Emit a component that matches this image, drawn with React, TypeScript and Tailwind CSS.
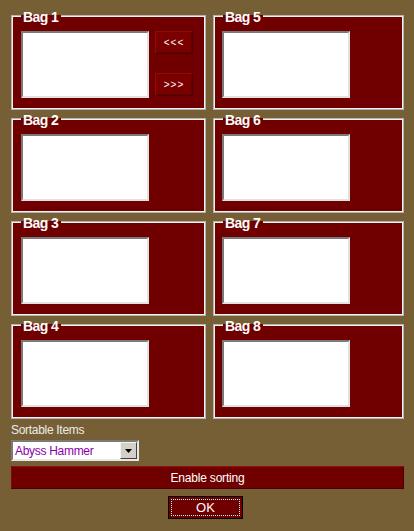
import { Fragment } from 'react';

const bagsLeft = [
  { name: 'Bag 1', arrows: true },
  { name: 'Bag 2', arrows: false },
  { name: 'Bag 3', arrows: false },
  { name: 'Bag 4', arrows: false },
];
const bagsRight = ['Bag 5', 'Bag 6', 'Bag 7', 'Bag 8'];

const font = "font-['Liberation_Sans',Arial,sans-serif]";

function ListBox() {
  return (
    <div className="w-[128px] h-[67px] bg-white border-2 border-t-[#7a7a7a] border-l-[#7a7a7a] border-b-[#e2e2e2] border-r-[#e2e2e2]" />
  );
}

function ArrowButton({ label }: { label: string }) {
  return (
    <button className="w-[38px] h-[23px] bg-[#7a0000] border border-t-[#8c0c0c] border-l-[#8c0c0c] border-b-[#4e0000] border-r-[#4e0000] shadow-[inset_-1px_-1px_0_#620000] text-white text-[10px] leading-none tracking-[1px] flex items-center justify-center">
      {label}
    </button>
  );
}

function Bag({ name, arrows, left }: { name: string; arrows?: boolean; left: boolean }) {
  return (
    <div
      className={`relative h-[95px] bg-[#700000] border border-[#b4b4b4] shadow-[inset_0_0_0_1px_#f2f2f2] pt-[15px] flex gap-[6px] ${
        left ? 'pl-[9px]' : 'pl-[8px]'
      }`}
    >
      <span className="absolute top-[-7px] left-[9px] w-[40px] h-[16px] pl-[2px] bg-[linear-gradient(#765f34_6px,#700000_6px)] text-white font-bold text-[14px] leading-[16px] tracking-[-0.6px]">
        {name}
      </span>
      <ListBox />
      {arrows && (
        <div className="h-[65px] flex flex-col justify-between">
          <ArrowButton label="<<<" />
          <ArrowButton label=">>>" />
        </div>
      )}
    </div>
  );
}

export default function App() {
  return (
    <div className={`w-[414px] h-[531px] bg-[#765f34] pt-[15px] pl-[11px] ${font}`}>
      <div className="grid grid-cols-[195px_191px] gap-x-[7px] gap-y-[8px]">
        {bagsLeft.map((bag, i) => (
          <Fragment key={bag.name}>
            <Bag name={bag.name} arrows={bag.arrows} left />
            <Bag name={bagsRight[i]} left={false} />
          </Fragment>
        ))}
      </div>

      <div className="mt-[5px] h-[13px] text-[12px] leading-[13px] tracking-[-0.3px] text-[#ececec]">Sortable Items</div>

      <div className="mt-[3px] w-[128px] h-[21px] bg-white border-2 border-t-[#7a7a7a] border-l-[#7a7a7a] border-b-[#e8e8e8] border-r-[#e8e8e8] flex items-center">
        <span className="flex-1 pl-[2px] text-[12px] leading-none tracking-[-0.3px] text-[#8a00a8]">Abyss Hammer</span>
        <span className="w-[17px] h-[17px] bg-[#d4d0c8] border border-t-[#f4f4f4] border-l-[#f4f4f4] border-b-[#404040] border-r-[#404040] flex items-center justify-center">
          <svg width="7" height="4" viewBox="0 0 7 4">
            <path d="M0 0h7L3.5 4z" fill="#000" />
          </svg>
        </span>
      </div>

      <button className="mt-[5px] w-[393px] h-[23px] bg-[#700000] border border-t-[#8e1010] border-l-[#800808] border-b-[#4a0000] border-r-[#4a0000] text-white text-[12px] leading-none tracking-[-0.2px] flex items-center justify-center">
        Enable sorting
      </button>

      <button className="mt-[7px] ml-[157px] w-[75px] h-[23px] bg-[#700000] border border-black p-[2px] block">
        <span className="w-full h-full border border-dotted border-[#b8ffff] text-white text-[13px] leading-none flex items-center justify-center">
          OK
        </span>
      </button>
    </div>
  );
}
